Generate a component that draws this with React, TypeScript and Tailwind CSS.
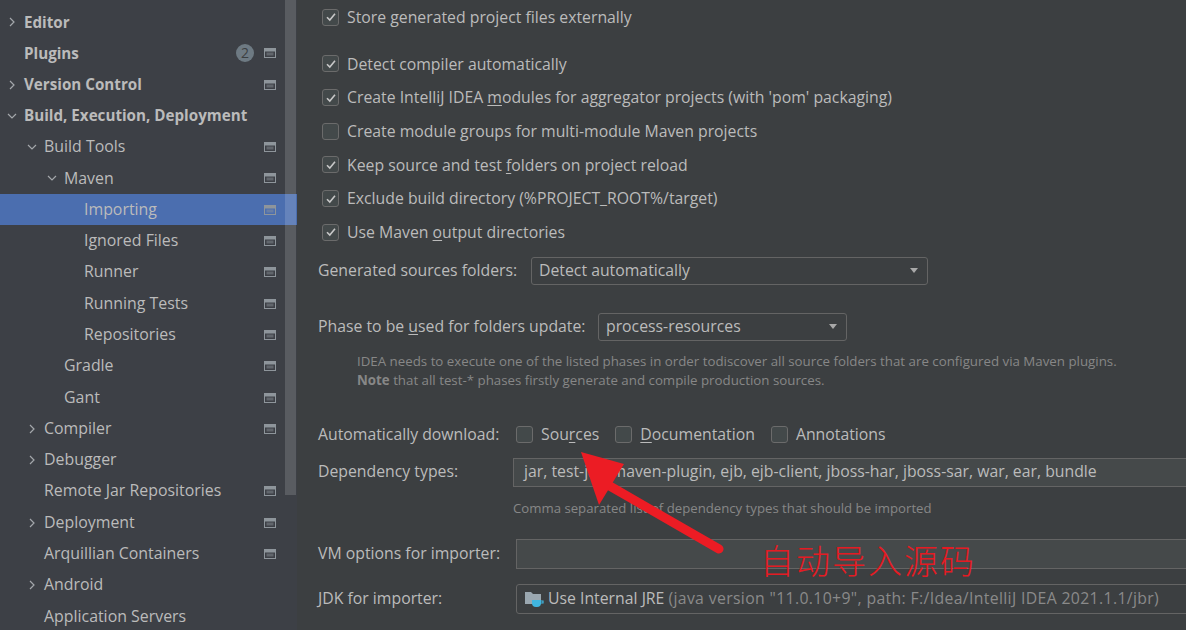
import React from "react";

const font = { fontFamily: '"Open Sans", "Noto Sans", sans-serif' };

type Node = {
  label: string;
  level: number;
  bold?: boolean;
  chevron?: "right" | "down";
  icon?: boolean;
  badge?: string;
  selected?: boolean;
};

const tree: Node[] = [
  { label: "Appearance & Behavior", level: 0, bold: true, chevron: "right" },
  { label: "Editor", level: 0, bold: true, chevron: "right" },
  { label: "Plugins", level: 0, bold: true, icon: true, badge: "2" },
  { label: "Version Control", level: 0, bold: true, chevron: "right", icon: true },
  { label: "Build, Execution, Deployment", level: 0, bold: true, chevron: "down" },
  { label: "Build Tools", level: 1, chevron: "down", icon: true },
  { label: "Maven", level: 2, chevron: "down", icon: true },
  { label: "Importing", level: 3, icon: true, selected: true },
  { label: "Ignored Files", level: 3, icon: true },
  { label: "Runner", level: 3, icon: true },
  { label: "Running Tests", level: 3, icon: true },
  { label: "Repositories", level: 3, icon: true },
  { label: "Gradle", level: 2, icon: true },
  { label: "Gant", level: 2, icon: true },
  { label: "Compiler", level: 1, chevron: "right", icon: true },
  { label: "Debugger", level: 1, chevron: "right" },
  { label: "Remote Jar Repositories", level: 1, icon: true },
  { label: "Deployment", level: 1, chevron: "right", icon: true },
  { label: "Arquillian Containers", level: 1, icon: true },
  { label: "Android", level: 1, chevron: "right" },
  { label: "Application Servers", level: 1 },
];

const indent = ["pl-[24px]", "pl-[44px]", "pl-[64px]", "pl-[84px]"];

function Chevron({ dir }: { dir: "right" | "down" }) {
  return (
    <svg width="10" height="10" viewBox="0 0 10 10" className="absolute -left-[17px] top-1/2 -translate-y-1/2">
      {dir === "right" ? (
        <path d="M3 1 L7 5 L3 9" fill="none" stroke="#a4a7ab" strokeWidth="1.2" />
      ) : (
        <path d="M1 3 L5 7 L9 3" fill="none" stroke="#a4a7ab" strokeWidth="1.2" />
      )}
    </svg>
  );
}

function ProjectIcon() {
  return (
    <svg width="12" height="10" viewBox="0 0 12 10">
      <rect x="0.5" y="0.5" width="11" height="9" fill="none" stroke="#8e959b" />
      <rect x="1" y="1" width="10" height="2.5" fill="#8e959b" />
      <rect x="2.5" y="4.5" width="7" height="3" fill="#8e959b" opacity="0.45" />
    </svg>
  );
}

function TreeRow({ n }: { n: Node }) {
  return (
    <div
      className={`flex items-center h-[31.3px] pr-[21px] ${indent[n.level]} ${n.selected ? "bg-[#4b6eaf]" : ""}`}
    >
      <div className="relative flex-1 flex items-center">
        {n.chevron && <Chevron dir={n.chevron} />}
        <span className={`text-[#bbbbbb] ${n.bold ? "font-bold text-[15.2px]" : "text-[15.9px]"}`}>{n.label}</span>
      </div>
      {n.badge && (
        <div className="mr-[10px] w-[18px] h-[18px] rounded-full bg-[#6e7a83] text-[#3c3f41] text-[14px] leading-[18px] text-center">
          {n.badge}
        </div>
      )}
      {n.icon && <ProjectIcon />}
    </div>
  );
}

function Check({ checked }: { checked?: boolean }) {
  return (
    <div className="w-[17px] h-[17px] shrink-0 rounded-[3px] border border-[#6b6b6b] bg-[#43494a] flex items-center justify-center">
      {checked && (
        <svg width="12" height="12" viewBox="0 0 12 12">
          <path d="M2 6.2 L4.8 9 L10 2.8" fill="none" stroke="#c8c8c8" strokeWidth="1.6" />
        </svg>
      )}
    </div>
  );
}

function CheckRow({ checked, children, first }: { checked?: boolean; children: React.ReactNode; first?: boolean }) {
  return (
    <div className={`flex items-center gap-[8px] ml-[4px] ${first ? "h-[34px]" : "h-[33.7px]"}`}>
      <Check checked={checked} />
      <span className="text-[15.8px] text-[#bbbbbb] pt-[1px]">{children}</span>
    </div>
  );
}

function Arrow() {
  return (
    <svg width="8" height="5" viewBox="0 0 8 5">
      <path d="M0 0 L8 0 L4 5 Z" fill="#a9a9a9" />
    </svg>
  );
}

function Combo({ width, text }: { width: string; text: string }) {
  return (
    <div className={`${width} h-[28px] rounded-[3px] border border-[#646464] bg-[#3c3f41] flex items-center justify-between pl-[7px] pr-[9px]`}>
      <span className="text-[15.8px] text-[#bbbbbb]">{text}</span>
      <Arrow />
    </div>
  );
}

function JdkIcon() {
  return (
    <svg width="20" height="18" viewBox="0 0 20 18">
      <path d="M1 2 H7 L9 4 H17 V14 H1 Z" fill="#9aa7b0" />
      <path d="M8 10 H17 V13 A4 4 0 0 1 13 17 H12 A4 4 0 0 1 8 13 Z" fill="#40b6e0" />
      <path d="M17 11 H19 V13 H17" fill="none" stroke="#40b6e0" strokeWidth="1.2" />
    </svg>
  );
}

export default function App() {
  return (
    <div className="relative flex w-[1186px] h-[630px] overflow-hidden bg-[#3c3f41]" style={font}>
      {/* sidebar */}
      <div className="relative w-[297px] shrink-0 bg-[#3d4046]">
        <div className="mt-[-25px]">
          {tree.map((n) => (
            <TreeRow key={n.label} n={n} />
          ))}
        </div>
        <div className="absolute right-[1px] top-0 w-[11px] h-[495px] bg-white/15" />
      </div>

      {/* content */}
      <div className="flex-1 flex flex-col pl-[21px] text-[#bbbbbb] text-[15.8px]">
        <CheckRow checked first>Store generated project files externally</CheckRow>
        <div className="mt-[13px]" />
        <CheckRow checked>Detect compiler automatically</CheckRow>
        <CheckRow checked>
          Create IntelliJ IDEA <span className="underline underline-offset-2">m</span>odules for aggregator projects (with 'pom' packaging)
        </CheckRow>
        <CheckRow>
          Create module <span className="underline underline-offset-2">g</span>roups for multi-module Maven projects
        </CheckRow>
        <CheckRow checked>
          Keep source and test <span className="underline underline-offset-2">f</span>olders on project reload
        </CheckRow>
        <CheckRow checked>Exclude build directory (%PROJECT_ROOT%/target)</CheckRow>
        <CheckRow checked>
          Use Maven <span className="underline underline-offset-2">o</span>utput directories
        </CheckRow>

        <div className="flex items-center mt-[7.5px] h-[28px]">
          <span className="w-[213px]">Generated sources folders:</span>
          <Combo width="w-[397px]" text="Detect automatically" />
        </div>

        <div className="flex items-center mt-[28px] h-[28px]">
          <span className="w-[280px]">
            Phase to be <span className="underline underline-offset-2">u</span>sed for folders update:
          </span>
          <Combo width="w-[249px]" text="process-resources" />
        </div>

        <div className="mt-[11.5px] ml-[39px] text-[13.3px] leading-[19px] text-[#878787]">
          <div>IDEA needs to execute one of the listed phases in order todiscover all source folders that are configured via Maven plugins.</div>
          <div>
            <span className="font-bold">Note</span> that all test-* phases firstly generate and compile production sources.
          </div>
        </div>

        <div className="flex items-center mt-[30.5px] h-[28px]">
          <span className="w-[198px]">Automatically download:</span>
          <div className="flex items-center gap-[8px]">
            <Check />
            <span>
              Sou<span className="underline underline-offset-2">r</span>ces
            </span>
          </div>
          <div className="flex items-center gap-[8px] ml-[16px]">
            <Check />
            <span>
              <span className="underline underline-offset-2">D</span>ocumentation
            </span>
          </div>
          <div className="flex items-center gap-[8px] ml-[16px]">
            <Check />
            <span>Annotations</span>
          </div>
        </div>

        <div className="flex items-center mt-[9px] h-[29px]">
          <span className="w-[195px] shrink-0">Dependency types:</span>
          <div className="flex-1 h-[29px] -mr-[4px] border border-[#646464] bg-[#45494a] flex items-center pl-[10px] whitespace-nowrap overflow-hidden">
            <span>jar, test-jar, maven-plugin, ejb, ejb-client, jboss-har, jboss-sar, war, ear, bundle</span>
          </div>
        </div>

        <div className="mt-[12px] h-[18px] ml-[195px] text-[13.2px] leading-[18px] text-[#878787]">
          Comma separated list of dependency types that should be imported
        </div>

        <div className="flex items-center mt-[22px] h-[30px]">
          <span className="w-[198px] shrink-0">VM options for importer:</span>
          <div className="flex-1 h-[30px] -mr-[4px] border border-[#646464] bg-[#45494a]" />
        </div>

        <div className="flex items-center mt-[15px] h-[30px]">
          <span className="w-[198px] shrink-0">JDK for importer:</span>
          <div className="flex-1 h-[30px] -mr-[4px] rounded-[3px] border border-[#646464] bg-[#3c3f41] flex items-center gap-[4px] pl-[7px] whitespace-nowrap overflow-hidden">
            <JdkIcon />
            <span className="text-[#bbbbbb]">Use Internal JRE</span>
            <span className="text-[#8a8a8a] tracking-[0.35px]">(java version "11.0.10+9", path: F:/Idea/IntelliJ IDEA 2021.1.1/jbr)</span>
          </div>
        </div>
      </div>

      {/* annotation */}
      <svg className="absolute left-0 top-0 pointer-events-none" width="1186" height="630">
        <line x1="719" y1="549" x2="608" y2="485" stroke="#ec1c24" strokeWidth="9" strokeLinecap="round" />
        <path d="M581 452 L624 464 L599 505 Z" fill="#ec1c24" />
      </svg>
      <div
        className="absolute left-[760px] top-[538px] text-[34px] leading-[44px] tracking-[2px] text-[#e41b23]"
        style={{ fontFamily: '"Noto Sans CJK SC", sans-serif', fontWeight: 300 }}
      >
        自动导入源码
      </div>
    </div>
  );
}
